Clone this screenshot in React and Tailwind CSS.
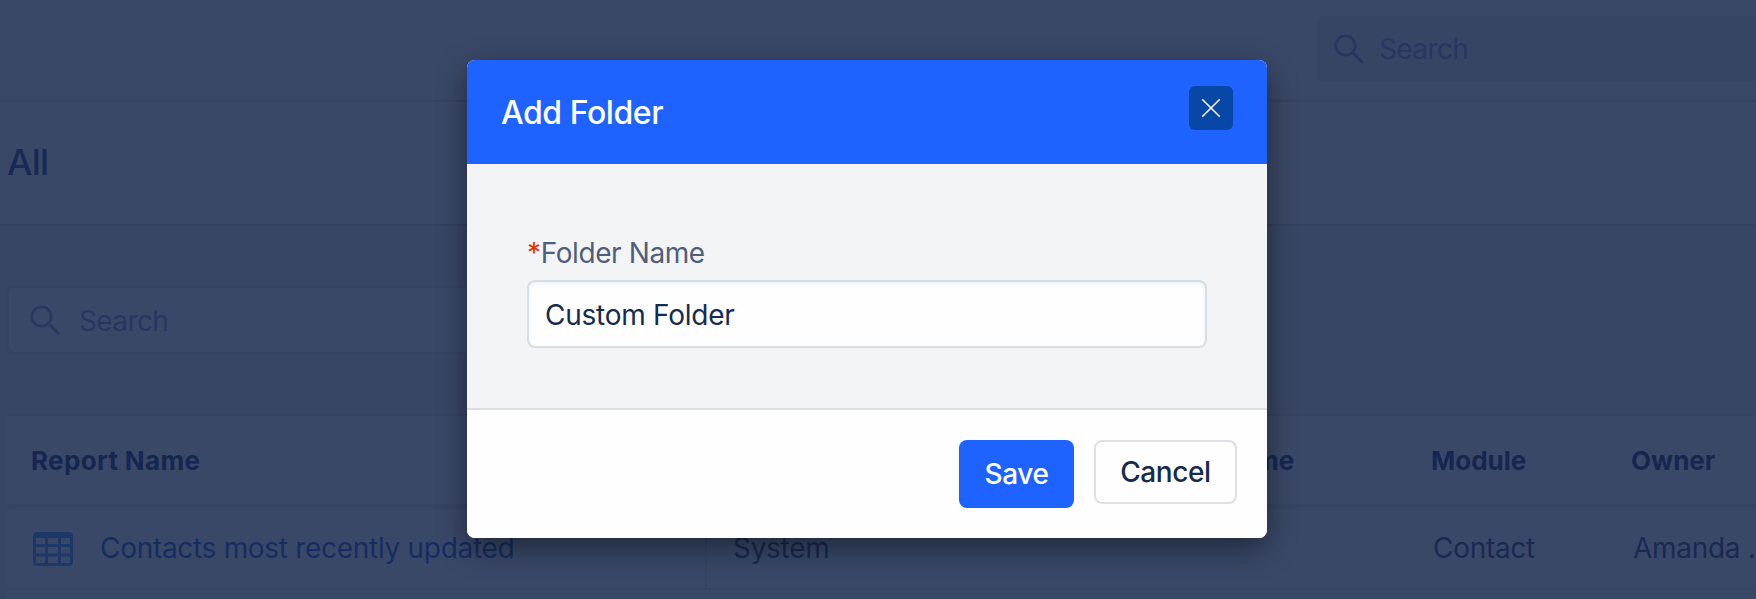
import React, { useState } from 'react';

// ============================================================================
// AddFolderModal — dialog over the (dimmed) reports listing
// ============================================================================

const SearchIcon = ({ className }) => (
  <svg className={className} viewBox="0 0 30 30" fill="none" stroke="currentColor" strokeWidth="2.7" strokeLinecap="round">
    <circle cx="11.5" cy="11.5" r="9.7" />
    <path d="M19 19L28 28" strokeWidth="3" />
  </svg>
);

const TableIcon = ({ className }) => (
  <svg className={className} viewBox="0 0 40 34" fill="currentColor">
    <path
      fillRule="evenodd"
      d="M4 0H36a4 4 0 0 1 4 4V30a4 4 0 0 1-4 4H4a4 4 0 0 1-4-4V4a4 4 0 0 1 4-4Z
         M3 6V12H12V6Z M15 6V12H25V6Z M28 6V12H37V6Z
         M3 15V21.5H12V15Z M15 15V21.5H25V15Z M28 15V21.5H37V15Z
         M3 24.5V31H12V24.5Z M15 24.5V31H25V24.5Z M28 24.5V31H37V24.5Z"
    />
  </svg>
);

const TopBar = () => (
  <header className="flex h-[100px] shrink-0 items-start justify-end bg-[#3a4868] pt-4">
    <div className="flex h-[66px] w-[439px] items-center rounded-l-lg bg-[#374565] pl-[17px] text-[#27375f]">
      <SearchIcon className="h-[30px] w-[30px]" />
      <span className="ml-[15px] text-[28px] leading-none tracking-[-0.6px]">Search</span>
    </div>
  </header>
);

const ReportsTable = () => (
  <div className="ml-[7px] mt-[60px] h-[185px] overflow-hidden border-t-2 border-[#364463] bg-[#3a4868]">
    <div className="flex h-[90px] items-center border-b-2 border-[#364463] pl-[24px] text-[26px] font-bold text-[#152650] shadow-[0_2px_3px_rgba(20,32,64,0.12)]">
      <span className="w-[702px] tracking-[0.35px]">Report Name</span>
      <span className="w-[698px] pl-[401px]">Folder Name</span>
      <span className="w-[200px]">Module</span>
      <span>Owner</span>
    </div>
    <div className="flex h-[84px] items-center border-b-2 border-[#364463] text-[28px] tracking-[-0.3px] text-[#1a2950]">
      <div className="flex h-full w-[700px] shrink-0 items-center border-r-2 border-[#364463] pl-[26px]">
        <TableIcon className="mt-[3px] h-[34px] w-[40px] text-[#1e3769]" />
        <span className="ml-[27px] whitespace-nowrap pt-[2px] text-[#152d61]">Contacts most recently updated</span>
      </div>
      <span className="w-[726px] shrink-0 pl-[26px] pt-[2px]">System</span>
      <span className="w-[200px] shrink-0 pt-[2px]">Contact</span>
      <span className="whitespace-nowrap pt-[2px]">Amanda .</span>
    </div>
  </div>
);

const AddFolderModal = () => {
  const [name, setName] = useState('Custom Folder');

  return (
    <div className="absolute left-[467px] top-[60px] flex h-[478px] w-[800px] flex-col overflow-hidden rounded-lg bg-white shadow-[0_10px_30px_rgba(0,0,0,0.45)]">
      <div className="flex h-[104px] shrink-0 items-start justify-between bg-[#1e63ff] pl-[34px] pr-[34px] pt-[26px]">
        <h2 className="pt-[5px] text-[32px] font-medium leading-[44px] tracking-[-0.45px] text-white">Add Folder</h2>
        <button className="flex h-11 w-11 items-center justify-center rounded-md bg-[#0747a6]">
          <svg className="h-[18px] w-[18px]" viewBox="0 0 18 18" stroke="white" strokeWidth="1.5" strokeLinecap="round">
            <path d="M0.7 0.7L17.3 17.3M17.3 0.7L0.7 17.3" />
          </svg>
        </button>
      </div>

      <div className="flex-1 bg-[#f2f4f6] px-[60px] pt-[68px]">
        <label className="block h-12 text-[28px] leading-[42px] tracking-[-0.4px] text-[#505f79]">
          <span className="text-[#de350b]">*</span>Folder Name
        </label>
        <input
          value={name}
          onChange={(e) => setName(e.target.value)}
          className="h-[68px] w-[680px] rounded-lg border-2 border-[#d5dee4] bg-[#fefefe] px-4 pt-px text-[28px] tracking-[-0.25px] text-[#172b4d] shadow-[inset_0_2px_4px_rgba(200,225,245,0.4)] outline-none"
        />
      </div>

      <div className="flex h-[130px] shrink-0 items-start justify-end gap-5 border-t-2 border-[#dddfe5] bg-[#fefefe] pr-[30px] pt-[30px] text-[28px] font-medium tracking-[-0.4px]">
        <button className="h-[68px] w-[115px] rounded-lg bg-[#1e63ff] text-white">Save</button>
        <button className="h-16 w-[143px] rounded-lg border-2 border-[#dfdfe6] text-[#172b4d]">Cancel</button>
      </div>
    </div>
  );
};

export default function App() {
  return (
    <div className="relative flex h-[599px] w-[1756px] flex-col overflow-hidden bg-[#384665] font-['Inter',sans-serif]">
      <TopBar />
      <div className="flex h-[126px] shrink-0 items-center border-b-2 border-[#334263] border-t-2 border-t-[#354362] bg-[#3a4868] pb-[2px] pl-[7px]">
        <h1 className="text-[36px] font-medium leading-none tracking-[-0.8px] text-[#182954]">All</h1>
      </div>
      <div className="ml-[7px] mt-[60px] flex h-[68px] w-[700px] shrink-0 items-center rounded-lg border-2 border-[#364463] bg-[#3a4868] pl-[21px] text-[#27375f]">
        <SearchIcon className="h-[30px] w-[30px]" />
        <span className="ml-[19px] pt-[2px] text-[28px] leading-none tracking-[-0.6px]">Search</span>
      </div>
      <ReportsTable />
      <AddFolderModal />
    </div>
  );
}
